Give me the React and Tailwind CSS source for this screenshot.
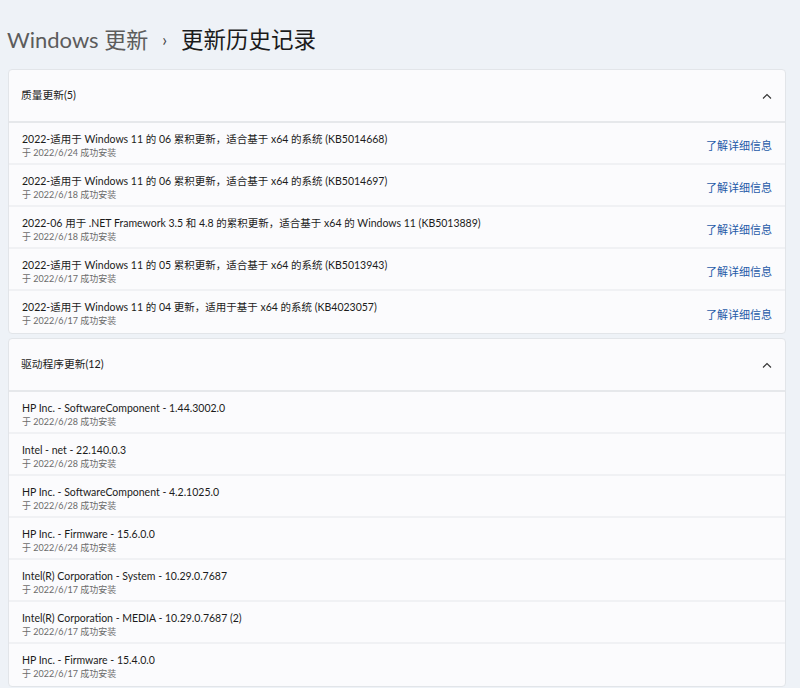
import React from "react";

const quality = [
  ["2022-适用于 Windows 11 的 06 累积更新，适合基于 x64 的系统 (KB5014668)", "于 2022/6/24 成功安装"],
  ["2022-适用于 Windows 11 的 06 累积更新，适合基于 x64 的系统 (KB5014697)", "于 2022/6/18 成功安装"],
  ["2022-06 用于 .NET Framework 3.5 和 4.8 的累积更新，适合基于 x64 的 Windows 11 (KB5013889)", "于 2022/6/18 成功安装"],
  ["2022-适用于 Windows 11 的 05 累积更新，适合基于 x64 的系统 (KB5013943)", "于 2022/6/17 成功安装"],
  ["2022-适用于 Windows 11 的 04 更新，适用于基于 x64 的系统 (KB4023057)", "于 2022/6/17 成功安装"],
];

const drivers = [
  ["HP Inc. - SoftwareComponent - 1.44.3002.0", "于 2022/6/28 成功安装"],
  ["Intel - net - 22.140.0.3", "于 2022/6/28 成功安装"],
  ["HP Inc. - SoftwareComponent - 4.2.1025.0", "于 2022/6/28 成功安装"],
  ["HP Inc. - Firmware - 15.6.0.0", "于 2022/6/24 成功安装"],
  ["Intel(R) Corporation - System - 10.29.0.7687", "于 2022/6/17 成功安装"],
  ["Intel(R) Corporation - MEDIA - 10.29.0.7687 (2)", "于 2022/6/17 成功安装"],
  ["HP Inc. - Firmware - 15.4.0.0", "于 2022/6/17 成功安装"],
];

function Chevron() {
  return (
    <svg width="10" height="6" viewBox="0 0 10 6" fill="none">
      <path d="M1 5.5 L5 1.5 L9 5.5" stroke="#333" strokeWidth="1.1" />
    </svg>
  );
}

function Section({ title, items, link }) {
  return (
    <div className="rounded-[4px] border border-[#e2e5e9] bg-[#fbfbfd] overflow-hidden">
      <div className="h-[53px] flex items-center justify-between pl-[12px] pr-[13px] border-b-2 border-[#e6e8eb]">
        <span className="text-[10.75px] text-[#1b1b1b]">{title}</span>
        <Chevron />
      </div>
      {items.map(([t, s], i) => (
        <div
          key={i}
          className={
            "h-[42px] flex items-center justify-between pl-[13px] pr-[13px] " +
            (i < items.length - 1 ? "border-b-2 border-[#f0f1f4]" : "")
          }
        >
          <div className="flex flex-col self-start pt-[9px]">
            <span className="text-[10.5px] text-[#1b1b1b] leading-[14px] whitespace-nowrap">{t}</span>
            <span className="text-[9px] text-[#6b6b6b] leading-[14px] whitespace-nowrap">{s}</span>
          </div>
          {link && <span className="text-[11px] text-[#1f5aa8] pt-[6px]">了解详细信息</span>}
        </div>
      ))}
    </div>
  );
}

export default function App() {
  return (
    <div
      className="w-[800px] h-[688px] overflow-hidden bg-[#eef2f7]"
      style={{ fontFamily: '"Lato", "Noto Sans CJK SC", sans-serif' }}
    >
      <div className="pl-[8px] pr-[14px]">
        <div className="h-[69px] flex items-center pt-[10px]">
          <span className="text-[22px] text-[#5c5c5c] -ml-[1px]">Windows 更新</span>
          <span className="ml-[14px] mr-[14px] text-[17px] text-[#444]">›</span>
          <span className="text-[22.5px] text-[#1b1b1b]">更新历史记录</span>
        </div>
        <div className="flex flex-col gap-[4px]">
          <Section title="质量更新(5)" items={quality} link />
          <Section title="驱动程序更新(12)" items={drivers} />
        </div>
      </div>
    </div>
  );
}
